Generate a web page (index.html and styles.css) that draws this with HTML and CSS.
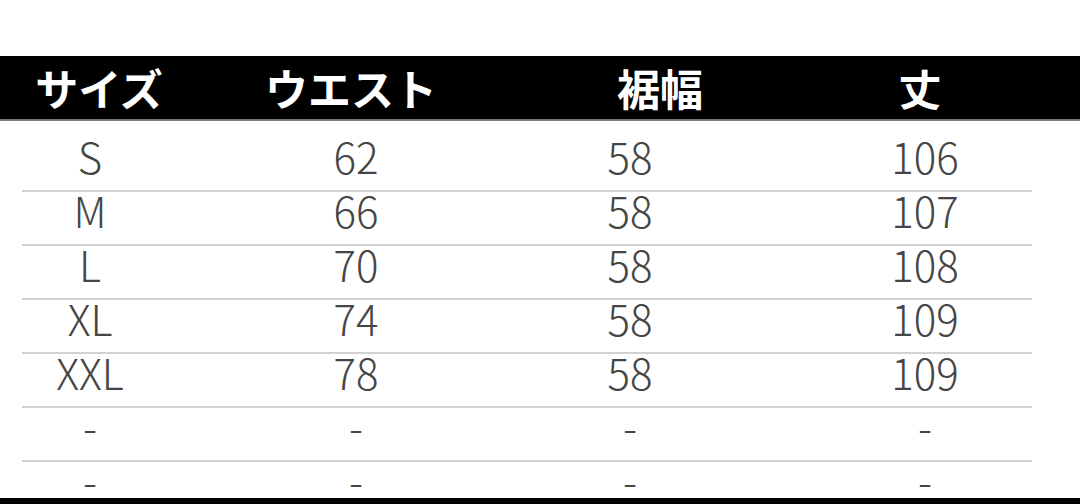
FILE: index.html
```html
<!DOCTYPE html>
<html lang="ja">
<head>
<meta charset="utf-8">
<title>サイズ表</title>
<link rel="stylesheet" href="styles.css">
</head>
<body>
<div class="page">
  <div class="head">
    <div class="h h1">サイズ</div>
    <div class="h h2">ウエスト</div>
    <div class="h h3">裾幅</div>
    <div class="h h4">丈</div>
  </div>
  <div class="body">
    <div class="row"><div class="c">S</div><div class="c">62</div><div class="c">58</div><div class="c c4">106</div></div>
    <div class="row"><div class="c">M</div><div class="c">66</div><div class="c">58</div><div class="c c4">107</div></div>
    <div class="row"><div class="c">L</div><div class="c">70</div><div class="c">58</div><div class="c c4">108</div></div>
    <div class="row"><div class="c">XL</div><div class="c">74</div><div class="c">58</div><div class="c c4">109</div></div>
    <div class="row"><div class="c">XXL</div><div class="c">78</div><div class="c">58</div><div class="c c4">109</div></div>
    <div class="row"><div class="c">-</div><div class="c">-</div><div class="c">-</div><div class="c c4">-</div></div>
    <div class="row last"><div class="c">-</div><div class="c">-</div><div class="c">-</div><div class="c c4">-</div></div>
  </div>
  <div class="foot"></div>
</div>
</body>
</html>
```

FILE: styles.css
```css
html, body {
  margin: 0;
  padding: 0;
  background: #ffffff;
}
body {
  width: 1080px;
  height: 504px;
  overflow: hidden;
  font-family: "Noto Sans CJK JP", "Noto Sans", sans-serif;
}
.page {
  display: flex;
  flex-direction: column;
  height: 504px;
}
.head {
  margin-top: 56px;
  height: 63px;
  background: #000;
  border-bottom: 2px solid #7a7a7a;
  display: grid;
  grid-template-columns: 198px 306px 312px 208px;
  align-items: center;
}
.h {
  color: #fff;
  font-weight: 700;
  font-size: 43px;
  line-height: 43px;
  text-align: center;
}
.body {
  flex: 1;
  padding-top: 17px;
}
.row {
  margin: 0 48px 0 22px;
  height: 52px;
  border-bottom: 2px solid #d2d2d2;
  display: grid;
  grid-template-columns: 136px 396px 152px 1fr;
}
.row.last {
  height: 36px;
  border-bottom: none;
}
.c {
  font-size: 42px;
  line-height: 36px;
  font-weight: 300;
  color: #454545;
  text-align: center;
}
.c4 {
  padding-left: 112px;
}
.foot {
  height: 6px;
  background: #000;
}
```
